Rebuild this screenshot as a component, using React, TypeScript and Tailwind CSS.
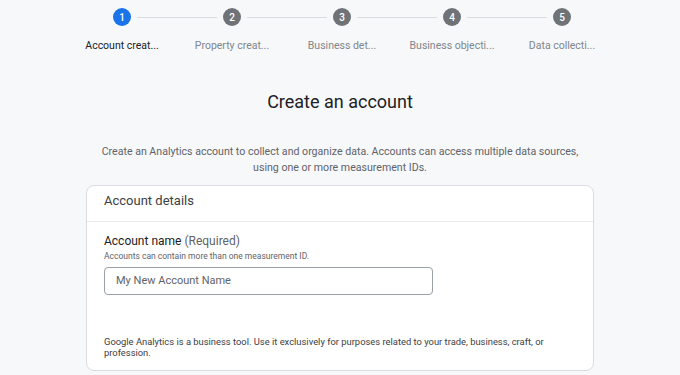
const steps = [
  "Account creat...",
  "Property creat...",
  "Business det...",
  "Business objecti...",
  "Data collecti...",
];

function Stepper() {
  return (
    <div className="flex pl-[67px] pt-[8px]">
      {steps.map((label, i) => (
        <div key={i} className="flex w-[110px] flex-col items-center">
          <div className="flex items-center">
            <div className={`h-px w-[40px] ${i === 0 ? "bg-transparent" : "bg-[#dadce0]"}`} />
            <div
              className={`mx-[6px] flex h-[18px] w-[18px] items-center justify-center rounded-full text-[10px] font-medium text-white ${
                i === 0 ? "bg-[#1a73e8]" : "bg-[#6f7378]"
              }`}
            >
              {i + 1}
            </div>
            <div className={`h-px w-[40px] ${i === steps.length - 1 ? "bg-transparent" : "bg-[#dadce0]"}`} />
          </div>
          <div
            className={`mt-[13px] whitespace-nowrap text-[10.5px] leading-[14px] ${
              i === 0 ? "text-[#202124]" : "text-[#80868b]"
            }`}
          >
            {label}
          </div>
        </div>
      ))}
    </div>
  );
}

export default function App() {
  return (
    <div className="h-[375px] w-[680px] overflow-hidden bg-[#f7f8fa] font-['Roboto',sans-serif]">
      <Stepper />

      <h1 className="mt-[37px] text-center text-[18px] leading-[24px] text-[#202124]">
        Create an account
      </h1>

      <p className="mx-auto mt-[30px] w-[484px] text-center text-[10.6px] leading-[16px] text-[#5f6368]">
        Create an Analytics account to collect and organize data. Accounts can access multiple data sources,
        using one or more measurement IDs.
      </p>

      <div className="mx-auto mt-[9px] w-[508px] rounded-[8px] border border-[#dadce0] bg-white">
        <div className="flex h-[36px] items-center border-b border-[#e8eaed] px-[17px] pb-[6px] text-[13px] text-[#3c4043]">
          Account details
        </div>
        <div className="px-[17px] pt-[11px] pb-[12px]">
          <div className="text-[12px] leading-[16px] text-[#202124]">
            Account name <span className="text-[#5f6368]">(Required)</span>
          </div>
          <div className="mt-[1px] text-[8.5px] leading-[12px] text-[#5f6368]">
            Accounts can contain more than one measurement ID.
          </div>
          <div className="mt-[5px] flex h-[28px] w-[329px] items-center rounded-[4px] border border-[#9aa0a6] px-[11px] text-[11px] text-[#5f6368]">
            My New Account Name
          </div>
          <p className="mt-[41px] w-[460px] text-[9.4px] leading-[11px] text-[#3c4043]">
            Google Analytics is a business tool. Use it exclusively for purposes related to your trade, business, craft, or
            profession.
          </p>
        </div>
      </div>
    </div>
  );
}
